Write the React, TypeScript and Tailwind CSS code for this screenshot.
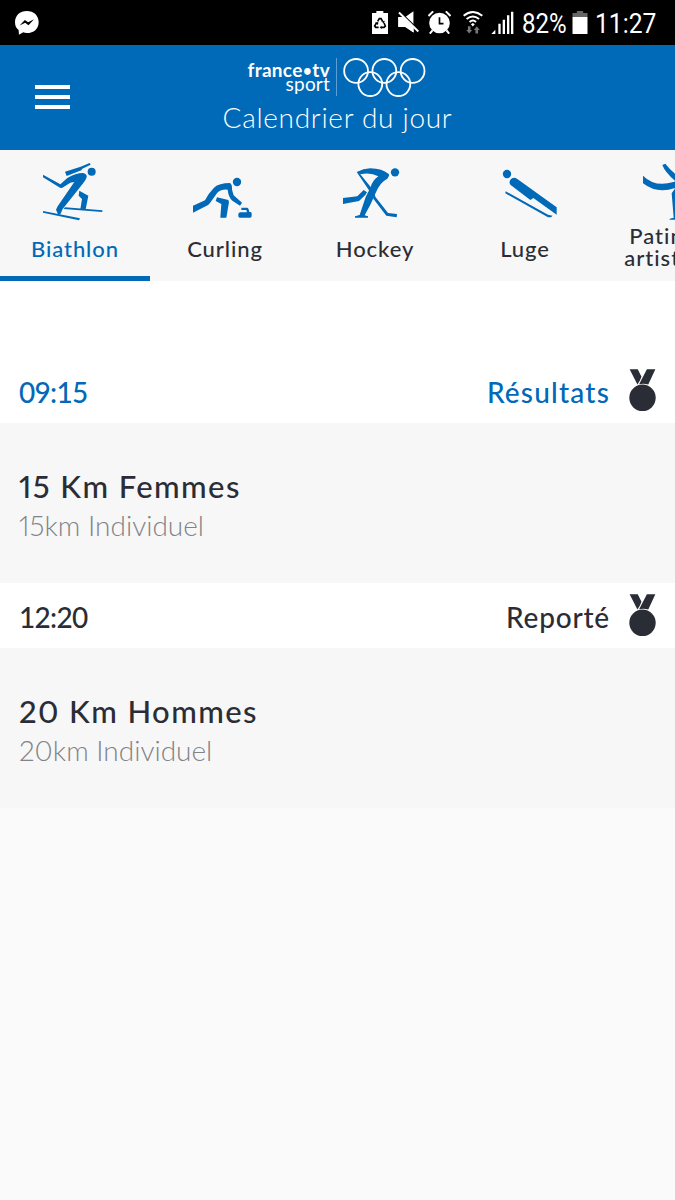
import type { ReactNode } from 'react';

type Sport = {
  label: string;
  lines?: string[];
  icon: ReactNode;
};

type Event = {
  time: string;
  status: string;
  done: boolean;
  title: string;
  subtitle: string;
};

const sports: Sport[] = [
  { label: 'Biathlon', icon: <BiathlonIcon /> },
  { label: 'Curling', icon: <CurlingIcon /> },
  { label: 'Hockey', icon: <HockeyIcon /> },
  { label: 'Luge', icon: <LugeIcon /> },
  { label: 'Patinage', lines: ['Patinage', 'artistique'], icon: <SkatingIcon /> },
];

const events: Event[] = [
  { time: '09:15', status: 'Résultats', done: true, title: '15 Km Femmes', subtitle: '15km Individuel' },
  { time: '12:20', status: 'Reporté', done: false, title: '20 Km Hommes', subtitle: '20km Individuel' },
];

function BiathlonIcon() {
  return (
    <svg viewBox="69 15 192 192" className="h-16 w-16" fill="currentColor">
      <circle cx="215" cy="50" r="12" />
      <path d="M135 50 182 35 209 24 212 29 187 41 184 46 140 63Z" />
      <path d="M69 59 121 88 142 69Q168 54 188 54Q202 56 200 67Q198 74 190 84L128 162 121 178 114 178 108 164 113 154 163 81 151 83 126 99 120 98 69 67Z" />
      <path d="M178 107 205 122 197 163 181 163 186 132 176 122Z" />
      <path d="M135 157 247 166 247 171 131 162ZM69 168 180 190 177 196 69 173Z" />
    </svg>
  );
}

function CurlingIcon() {
  return (
    <svg viewBox="69 15 192 192" className="h-16 w-16" fill="currentColor">
      <circle cx="201" cy="81" r="12.5" />
      <path d="M69 152 105 136Q116 114 132 98Q147 84 180 84Q187 88 186 104L191 121 216 143 210 152 187 137Q175 126 173 104Q154 102 142 113L120 144Q115 151 107 154L69 173Z" />
      <path d="M141 127 175 135 177 141 169 188 151 188 154 147 137 138Z" />
      <path d="M214 158H231Q236 158 238 171H242Q245 172 245 176V183Q245 188 240 188H210Q205 188 205 183V177Q206 172 211 172H231L229 165H214Z" />
    </svg>
  );
}

function HockeyIcon() {
  return (
    <svg viewBox="69 15 192 192" className="h-16 w-16" fill="currentColor">
      <circle cx="225" cy="52" r="12.5" />
      <path d="M110 51Q130 41 151 40Q187 40 207 58Q209 65 202 71Q179 83 168 112L151 149 134 181 144 184V188H105V184L119 180 137 126 151 98Q157 77 175 64Q151 51 121 58Z" />
      <path d="M110 51 118 54 155 100 167 127 204 174 231 177 230 187 199 182 160 131 148 107Z" />
      <path d="M69 129 112 124 131 105 141 112 136 120 117 138 69 147Z" />
    </svg>
  );
}

function LugeIcon() {
  return (
    <svg viewBox="54 15 192 192" className="h-16 w-16" fill="currentColor">
      <circle cx="96" cy="57" r="12.5" />
      <path d="M106 74Q115 64 127 72L245 157V179L175 129 166 135 107 90Q101 83 106 74Z" />
      <path d="M92 109 219 179 233 182 228 187 219 187 91 115Z" />
    </svg>
  );
}

function SkatingIcon() {
  return (
    <svg viewBox="504 15 192 192" className="h-16 w-16" fill="currentColor">
      <path d="M504 62Q540 98 595 81L602 79Q570 52 562 30L571 26Q590 50 612 66L640 76V96L610 108V194H583Q583 190 596 188L590 115 602 98Q548 119 504 85Z" />
      <circle cx="636" cy="60" r="12.5" />
    </svg>
  );
}

function MedalIcon() {
  return (
    <svg viewBox="464 27 78 124" className="-mt-[2px] h-[42px] w-[27px] text-[#2b2d36]" fill="currentColor">
      <circle cx="503" cy="112" r="39" />
      <path d="M465 28H489L500 50 495 62 488 73ZM516 28H541L520 73Q508 69 493 72Z" />
    </svg>
  );
}

function StatusBar() {
  return (
    <div className="flex h-[45px] items-start bg-black pt-[11px] pl-[15px] text-white">
      <svg viewBox="46 33 73 73" className="h-6 w-6" fill="currentColor">
        <path d="M82 33C103 33 118 47 118 67S103 100 82 100Q76 100 71 98L58 105 57 91Q46 82 46 67C46 47 61 33 82 33Z" />
        <path d="M60 77 76 60 86 67 104 58 87 76 77 69Z" fill="#000" />
      </svg>

      <svg viewBox="36 33 48 69" className="ml-[333px] h-[23px] w-4" fill="currentColor">
        <path d="M36 39H49V33H70V39H84V102H36Z" />
        <g fill="none" stroke="#000" strokeWidth="5">
          <path d="M53 64 58 56H63L68 64M72 69 76 78 72 82H64M56 82H47L44 78 50 68" />
        </g>
        <path d="M64 65 74 62 72 70ZM65 77V88L59 82ZM45 68 55 66 54 75Z" fill="#000" />
      </svg>
      <svg viewBox="115 33 64 66" className="ml-[10px] h-[22px] w-[21px]" fill="currentColor">
        <path d="M116 51H137L162 33V98L137 81H116Z" />
        <path d="M114 35 181 100" stroke="#000" strokeWidth="14" />
        <path d="M118 37 177 95" stroke="currentColor" strokeWidth="6" />
        <path d="M116 51H129L163 84V98L138 81H116Z" />
      </svg>
      <svg viewBox="203 33 68 69" className="ml-[9px] h-[23px] w-[23px]" fill="currentColor">
        <circle cx="237" cy="69" r="31" />
        <path d="M237 52V71H249" fill="none" stroke="#000" strokeWidth="5" />
        <path d="M204 48 218 34M256 34 270 48M216 91 208 101M258 91 266 101" stroke="currentColor" strokeWidth="6" />
      </svg>
      <svg viewBox="308 33 61 69" className="ml-3 h-[23px] w-5" fill="none" stroke="currentColor" strokeWidth="6">
        <path d="M310 47Q338 24 367 47M319 57Q338 41 357 57M328 66Q338 57 348 66" />
        <path d="M332 73 338 69 344 73 338 80Z" fill="currentColor" stroke="none" />
        <path d="M323 79H331V90H336L327 101 318 90H323ZM346 101H354V90H359L350 79 341 90H346Z" fill="#777" stroke="none" />
      </svg>
      <svg viewBox="392 33 69 69" className="ml-2 h-[23px] w-[23px]" fill="currentColor">
        <path d="M393 102 405 89V102ZM414 71H421V102H414ZM427 59H434V102H427ZM440 46H447V102H440ZM452 35H459V102H452Z" />
      </svg>
      <span className="ml-[8px] w-[50px] origin-left scale-x-[0.86] font-['Roboto'] text-[28px] leading-[25px] whitespace-nowrap">
        82%
      </span>
      <svg viewBox="170 33 47 69" className="h-[23px] w-4" fill="currentColor">
        <path d="M171 39H184V33H203V39H216V51H171Z" fill="#666" />
        <path d="M171 51H216V102H171Z" />
      </svg>
      <span className="ml-[7px] origin-left scale-x-[0.88] font-['Roboto'] text-[28px] leading-[25px] whitespace-nowrap">
        11:27
      </span>
    </div>
  );
}

function Logo() {
  return (
    <div className="flex h-10 items-start justify-center text-white">
      <div className="flex w-[82px] flex-col items-end pt-[5px]">
        <span className="flex items-center text-[19px] leading-[14px] font-bold tracking-[0.3px] whitespace-nowrap">
          france
          <span className="mx-[0.5px] text-[15px] tracking-normal">•</span>
          tv
        </span>
        <span className="text-[19px] leading-[14px] tracking-[0.2px]">sport</span>
      </div>
      <div className="ml-[6px] h-[38px] w-px bg-[#5b9fd6]" />
      <svg viewBox="384 25 250 118" className="mr-px ml-[6px] h-[39px] w-[83px]" fill="none" stroke="currentColor" strokeWidth="5.500">
        <circle cx="423" cy="64" r="36" />
        <circle cx="508.500" cy="64" r="36" />
        <circle cx="594" cy="64" r="36" />
        <circle cx="466" cy="104" r="36" />
        <circle cx="551" cy="104" r="36" />
      </svg>
    </div>
  );
}

function Header() {
  return (
    <header className="grid h-[105px] grid-cols-[100px_1fr_100px] bg-[#0069b8] text-white">
      <button type="button" aria-label="Menu" className="mt-10 ml-[35px] flex h-6 w-[35px] flex-col justify-between">
        <span className="h-1 w-full bg-white" />
        <span className="h-1 w-full bg-white" />
        <span className="h-1 w-full bg-white" />
      </button>
      <div className="flex flex-col items-center pt-[13px]">
        <Logo />
        <h1 className="mt-px text-[28px] leading-9 font-light tracking-[0.7px] whitespace-nowrap">Calendrier du jour</h1>
      </div>
    </header>
  );
}

function SportTab({ sport, active }: { sport: Sport; active: boolean }) {
  return (
    <button
      type="button"
      className={`flex h-[131px] w-[150px] shrink-0 flex-col items-center border-b-5 pt-[10px] ${
        active ? 'border-[#0069b8] text-[#0069b8]' : 'border-transparent text-[#2b2d36]'
      }`}
    >
      <span className="text-[#0069b8]">{sport.icon}</span>
      <span
        className={`flex flex-col items-center justify-center text-[22px] leading-[22px] font-medium ${
          sport.lines ? 'h-[46px] tracking-[1px]' : 'h-[50px] tracking-[0.9px]'
        }`}
      >
        {(sport.lines ?? [sport.label]).map(line => (
          <span key={line}>{line}</span>
        ))}
      </span>
    </button>
  );
}

function EventRow({ event }: { event: Event }) {
  return (
    <section>
      <div
        className={`flex h-[65px] items-center bg-white pr-[19px] pl-[19px] text-[28px] font-medium ${
          event.done ? 'text-[#0069b8]' : 'text-[#2b2d36]'
        }`}
      >
        <span className="flex-1 pt-[2px] tracking-[-0.7px]">{event.time}</span>
        <span className={`pt-[2px] pr-[19px] ${event.done ? 'tracking-[1.2px]' : 'tracking-[0.8px]'}`}>{event.status}</span>
        <MedalIcon />
      </div>
      <div className="h-40 bg-[#f7f7f7] pt-[42px] pl-[19px]">
        <h2 className="text-[31px] leading-[42px] font-medium tracking-[1.4px] text-[#2b2d36] proportional-nums">
          {event.title}
        </h2>
        <p className="text-[28px] leading-9 font-light text-[#828387] proportional-nums">{event.subtitle}</p>
      </div>
    </section>
  );
}

export default function App() {
  return (
    <div className="flex h-[1200px] w-[675px] flex-col overflow-hidden bg-[#fafafa] font-['Lato','Open_Sans',sans-serif]">
      <StatusBar />
      <Header />
      <nav className="flex shrink-0 overflow-hidden bg-[#f7f7f7]">
        {sports.map((sport, index) => (
          <SportTab key={sport.label} sport={sport} active={index === 0} />
        ))}
      </nav>
      <main>
        <div className="h-[77px] bg-white" />
        {events.map(event => (
          <EventRow key={event.time} event={event} />
        ))}
      </main>
    </div>
  );
}
